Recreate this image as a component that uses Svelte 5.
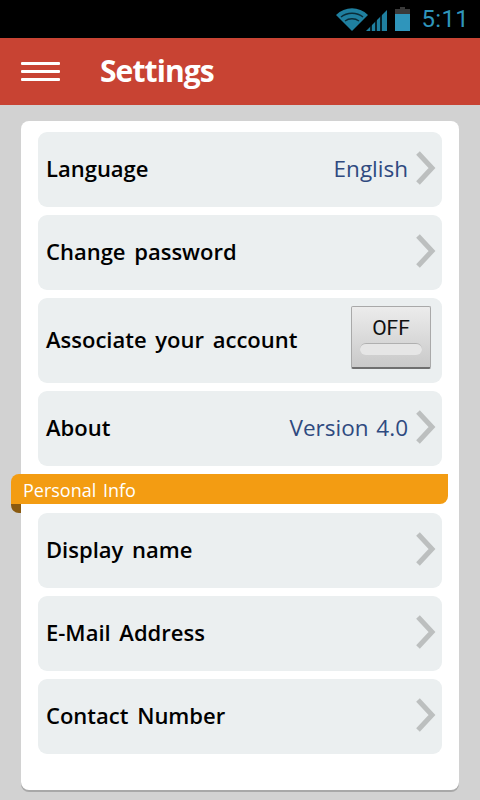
<script>
  const general = [
    { label: 'Language', value: 'English' },
    { label: 'Change password' },
    { label: 'Associate your account', toggle: true },
    { label: 'About', value: 'Version 4.0' }
  ];
  const personal = [
    { label: 'Display name' },
    { label: 'E-Mail Address' },
    { label: 'Contact Number' }
  ];
</script>

{#snippet row(item)}
  <div class="row" class:tall={item.toggle}>
    <span class="label">{item.label}</span>
    {#if item.value}<span class="value">{item.value}</span>{/if}
    {#if item.toggle}
      <div class="toggle">
        <span class="off">OFF</span>
        <span class="slot"></span>
      </div>
    {:else}
      <svg class="chevron" width="21" height="36" viewBox="0 0 21 36">
        <path d="M3 3 L17 18 L3 33" fill="none" stroke="#bcbfbf" stroke-width="5" />
      </svg>
    {/if}
  </div>
{/snippet}

<div class="screen">
  <div class="status">
    <svg class="wifi" width="32" height="24" viewBox="0 0 32 24">
      <path d="M0 8 C9 -1 23 -1 32 8 L16 24 Z" fill="#1f7f9f" />
      <path d="M5 10 C11 5 21 5 27 10 M9 14 C13 11 19 11 23 14" fill="none" stroke="#0a2c38" stroke-width="1.5" />
    </svg>
    <svg class="signal" width="21" height="24" viewBox="0 0 21 24">
      <path d="M0 24 L21 3 V24 Z" fill="#1f7f9f" />
      <path d="M5 24 V18 M10 24 V13 M15 24 V8" stroke="#000" stroke-width="1.500" />
    </svg>
    <svg class="battery" width="15" height="24" viewBox="0 0 15 24">
      <rect x="5" y="0" width="5" height="3" fill="#3a3a3a" />
      <rect x="0" y="2" width="15" height="5" fill="#3a3a3a" />
      <rect x="0" y="7" width="15" height="17" fill="#2f95bb" />
    </svg>
    <span class="time">5:11</span>
  </div>

  <header>
    <div class="menu"><span></span><span></span><span></span></div>
    <h1>Settings</h1>
  </header>

  <main>
    <div class="card">
      <div class="group">
        {#each general as item}
          {@render row(item)}
        {/each}
      </div>
      <div class="banner">Personal Info</div>
      <div class="group">
        {#each personal as item}
          {@render row(item)}
        {/each}
      </div>
    </div>
  </main>
</div>

<style>
  :global(body) {
    background: #d2d2d2;
  }

  .screen {
    width: 480px;
    height: 800px;
    overflow: hidden;
    background: #d2d2d2;
    font-family: "Open Sans", sans-serif;
  }

  .status {
    height: 38px;
    box-sizing: border-box;
    background: #000;
    display: flex;
    align-items: center;
    justify-content: flex-end;
    padding-right: 11px;
  }

  .signal {
    margin-left: -2px;
  }

  .battery {
    margin-left: 8px;
  }

  .time {
    margin-left: 12px;
    color: #2f95bb;
    font-family: Roboto, sans-serif;
    font-size: 24px;
    letter-spacing: 0.3px;
  }

  header {
    height: 67px;
    background: #c84333;
    display: flex;
    align-items: center;
    padding-left: 21px;
    gap: 40px;
  }

  .menu {
    width: 39px;
    display: flex;
    flex-direction: column;
    gap: 5px;
  }

  .menu span {
    height: 3px;
    border-radius: 1px;
    background: #fff;
  }

  h1 {
    margin: 0 0 2px;
    color: #fff;
    font-size: 30px;
    font-weight: 700;
    letter-spacing: -0.9px;
  }

  main {
    padding: 16px 21px 0;
  }

  .card {
    height: 669px;
    box-sizing: border-box;
    padding: 11px 17px;
    background: #fff;
    border-radius: 8px;
    box-shadow: 0 2px 0 #a8a8a8;
  }

  .group {
    display: flex;
    flex-direction: column;
    gap: 8px;
  }

  .row {
    height: 75px;
    box-sizing: border-box;
    padding: 0 6px 0 8px;
    background: #ebeff0;
    border-radius: 9px;
    display: flex;
    align-items: center;
  }

  .row.tall {
    height: 85px;
    padding-right: 11px;
  }

  .label {
    flex: 1;
    margin-bottom: 4px;
    color: #000;
    font-size: 22px;
    font-weight: 600;
    word-spacing: 3px;
  }

  .value {
    margin: 0 7px 3px 0;
    color: #2f4a80;
    font-size: 22.5px;
    word-spacing: 2px;
  }

  .chevron {
    margin-bottom: 3px;
  }

  .toggle {
    width: 80px;
    height: 63px;
    margin-bottom: 6px;
    box-sizing: border-box;
    padding-top: 9px;
    background: linear-gradient(#ececec, #c9c9c9);
    border: 1px solid #a9a9a9;
    border-bottom: 2px solid #6f6f6f;
    border-radius: 2px;
    display: flex;
    flex-direction: column;
    align-items: center;
  }

  .off {
    color: #111;
    font-family: Roboto, sans-serif;
    font-size: 21px;
    line-height: 25px;
  }

  .slot {
    width: 62px;
    height: 11px;
    margin-top: 2px;
    border-radius: 6px;
    background: #e6e6e6;
    border-top: 1px solid #b0b0b0;
  }

  .banner {
    height: 30px;
    box-sizing: border-box;
    margin: 8px -6px 9px -27px;
    padding-left: 12px;
    position: relative;
    background: #f39c12;
    border-radius: 8px 0 8px 0;
    color: #fff;
    font-size: 18px;
    line-height: 32px;
    word-spacing: 2px;
  }

  /* the fold under the left edge */
  .banner::after {
    content: "";
    position: absolute;
    left: 0;
    top: 30px;
    width: 10px;
    height: 9px;
    background: #8a5a10;
    border-radius: 0 0 0 8px;
  }
</style>
